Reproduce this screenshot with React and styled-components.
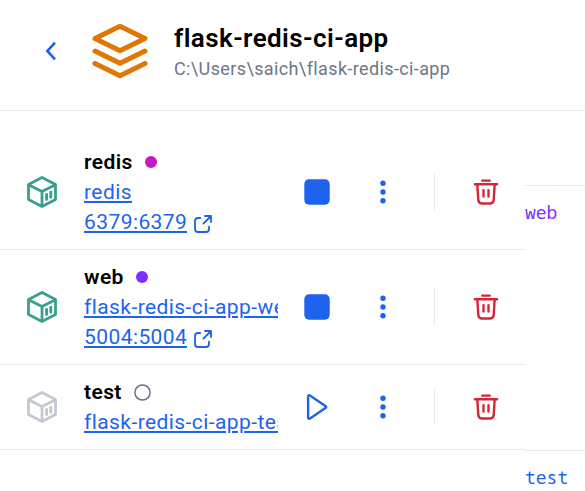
import React from "react";
import styled, { createGlobalStyle } from "styled-components";

const GlobalStyle = createGlobalStyle`
  * { box-sizing: border-box; }
  body { margin: 0; background: #fff; font-family: Roboto, "Liberation Sans", sans-serif; }
`;

const Page = styled.main`
  width: 585px;
  height: 491px;
  overflow: hidden;
  background: #fff;
`;

const Header = styled.header`
  display: flex;
  height: 111px;
  padding-left: 33px;
  border-bottom: 1px solid #e9e9e9;
`;

const BackButton = styled.button`
  display: block;
  width: 36px;
  height: 36px;
  margin: 33px 17px 0 0;
  padding: 0;
  border: 0;
  background: none;
`;

const StackMark = styled.div`
  width: 68px;
  height: 68px;
  margin: 17px 20px 0 0;
`;

const Titles = styled.div`
  padding-top: 20px;
  white-space: nowrap;
`;

const Title = styled.h1`
  margin: 0;
  font-size: 26px;
  line-height: 36px;
  font-weight: 600;
  letter-spacing: 0.42px;
  color: #000;
`;

const Path = styled.div`
  font-size: 18px;
  line-height: 26px;
  letter-spacing: 0.38px;
  color: #6c7788;
`;

const Body = styled.div`
  display: flex;
  height: 380px;
`;

const ServiceList = styled.ul`
  width: 525px;
  margin: 0;
  padding: 24px 0 0;
  list-style: none;
`;

const ServiceRow = styled.li`
  display: grid;
  grid-template-columns: 84px 194px 78px 54px 49px 54px;
  align-items: center;
  padding: 12px 0;
  border-bottom: 1px solid #e9e9e9;
`;

const IconCell = styled.span`
  display: flex;
  justify-content: center;
`;

const Info = styled.div`
  min-width: 0;
`;

const Line = styled.div`
  display: flex;
  align-items: center;
  height: 30px;
  gap: ${(p) => p.$gap || 0}px;
`;

const ServiceName = styled.span`
  font-size: 21px;
  line-height: 30px;
  font-weight: 600;
  letter-spacing: 0.4px;
  color: #000;
`;

const Link = styled.a`
  overflow: hidden;
  white-space: nowrap;
  font-size: 21px;
  line-height: 30px;
  letter-spacing: 0.42px;
  color: #1d63ed;
  text-decoration: underline;
  text-decoration-thickness: 2px;
  text-underline-offset: 2px;
`;

const StatusDot = styled.span`
  width: 12px;
  height: 12px;
  border-radius: 50%;
  background: ${(p) => p.$color};
`;

const IconButton = styled.button`
  display: flex;
  justify-content: center;
  padding: 0;
  border: 0;
  background: none;
`;

const Divider = styled.span`
  justify-self: end;
  width: 1px;
  height: 36px;
  margin-right: 24px;
  background: #e9e9e9;
`;

const LogPanel = styled.aside`
  width: 60px;
  padding-top: 74px;
`;

const LogEntry = styled.div`
  height: 265px;
  padding-top: 11px;
  border-top: 1px solid #e9e9e9;
  font-family: "Noto Sans Mono", "DejaVu Sans Mono", monospace;
  font-size: 18px;
  line-height: 30px;
  color: ${(p) => p.$color};
`;

const ChevronIcon = () => (
  <svg width="36" height="36" viewBox="0 0 36 36" fill="none" stroke="#1d63ed" strokeWidth="2.6">
    <path d="M22 9.6L14.3 18L22 26.4" />
  </svg>
);

const StackIcon = () => (
  <svg width="68" height="68" viewBox="0 0 68 68" fill="none" stroke="#dd7805" strokeWidth="5" strokeLinecap="round" strokeLinejoin="round">
    <path d="M34 9.3L59 21.5L34 33.8L9 21.5Z" />
    <path d="M9 34L34 46.3L59 34" />
    <path d="M9 46.4L34 58.7L59 46.4" />
  </svg>
);

const ContainerIcon = ({ color }) => (
  <svg width="30" height="32" viewBox="0 0 30 32" fill="none" stroke={color} strokeWidth="2.8" strokeLinejoin="round">
    <path d="M15 1.5L28.5 8.5V23.5L15 30.5L1.5 23.5V8.5Z" />
    <path d="M1.5 8.8L15 15.6L28.5 8.8M15 15.6V30" />
    <path d="M19.6 18.4V23.6M23.8 16.1V21.3" strokeWidth="2.9" strokeLinecap="round" />
  </svg>
);

const HollowStatus = () => (
  <svg width="17" height="17" viewBox="0 0 17 17" fill="none" stroke="#677285" strokeWidth="1.5">
    <circle cx="8.5" cy="8.5" r="7.6" />
  </svg>
);

const ExternalSvg = styled.svg`
  margin-top: 3px;
`;

const ExternalIcon = () => (
  <ExternalSvg width="18" height="18" viewBox="0 0 18 18" fill="none" stroke="#1d63ed" strokeWidth="1.8" strokeLinecap="round" strokeLinejoin="round">
    <path d="M6.2 3H4Q1 3 1 6V14Q1 17 4 17H12Q15 17 15 14V11.6" />
    <path d="M11 1H17V7M17 1L9.4 8.6" />
  </ExternalSvg>
);

const StopIcon = () => (
  <svg width="26" height="26" viewBox="0 0 26 26">
    <rect x="0.3" y="0.3" width="25.4" height="25.4" rx="4.6" fill="#1d63ed" />
  </svg>
);

const PlayIcon = () => (
  <svg width="26" height="28" viewBox="0 0 26 28" fill="none" stroke="#1d63ed" strokeWidth="2.4" strokeLinejoin="round">
    <path d="M4.1 3.9Q4.1 1.2 6.4 2.7L21.4 12.9Q23 14 21.4 15.1L6.4 25.3Q4.1 26.8 4.1 24.1Z" />
  </svg>
);

const MoreIcon = () => (
  <svg width="6" height="24" viewBox="0 0 6 24" fill="#1d63ed">
    <circle cx="3" cy="3.2" r="2.7" />
    <circle cx="3" cy="12" r="2.7" />
    <circle cx="3" cy="20.8" r="2.7" />
  </svg>
);

const TrashIcon = () => (
  <svg width="26" height="26" viewBox="0 0 26 26" fill="none" stroke="#d52536" strokeWidth="2.4" strokeLinecap="round" strokeLinejoin="round">
    <path d="M9.2 1.6H16.8M1.9 5.3H24.1" />
    <path d="M4.3 5.4L5.3 20.8Q5.6 24.5 9.2 24.5H16.8Q20.4 24.5 20.7 20.8L21.7 5.4" />
    <path d="M10.5 11.2V17.6M15.5 11.2V17.6" />
  </svg>
);

const services = [
  { name: "redis", container: "redis", ports: "6379:6379", dot: "#c718c0" },
  { name: "web", container: "flask-redis-ci-app-web-1", ports: "5004:5004", dot: "#7d2eff" },
  { name: "test", container: "flask-redis-ci-app-test-1" },
];

export default function App() {
  return (
    <Page>
      <GlobalStyle />
      <Header>
        <BackButton aria-label="Back"><ChevronIcon /></BackButton>
        <StackMark><StackIcon /></StackMark>
        <Titles>
          <Title>flask-redis-ci-app</Title>
          <Path>C:\Users\saich\flask-redis-ci-app</Path>
        </Titles>
      </Header>
      <Body>
        <ServiceList>
          {services.map((s) => (
            <ServiceRow key={s.name}>
              <IconCell><ContainerIcon color={s.dot ? "#3a9f8d" : "#c4c8d1"} /></IconCell>
              <Info>
                <Line $gap={12}>
                  <ServiceName>{s.name}</ServiceName>
                  {s.dot ? <StatusDot $color={s.dot} /> : <HollowStatus />}
                </Line>
                <Line><Link>{s.container}</Link></Line>
                {s.ports && (
                  <Line $gap={7}>
                    <Link>{s.ports}</Link>
                    <ExternalIcon />
                  </Line>
                )}
              </Info>
              <IconButton aria-label={s.dot ? "Stop" : "Start"}>
                {s.dot ? <StopIcon /> : <PlayIcon />}
              </IconButton>
              <IconButton aria-label="More"><MoreIcon /></IconButton>
              <Divider />
              <IconButton aria-label="Delete"><TrashIcon /></IconButton>
            </ServiceRow>
          ))}
        </ServiceList>
        <LogPanel>
          <LogEntry $color="#7d2eff">web</LogEntry>
          <LogEntry $color="#1d63ed">test</LogEntry>
        </LogPanel>
      </Body>
    </Page>
  );
}
